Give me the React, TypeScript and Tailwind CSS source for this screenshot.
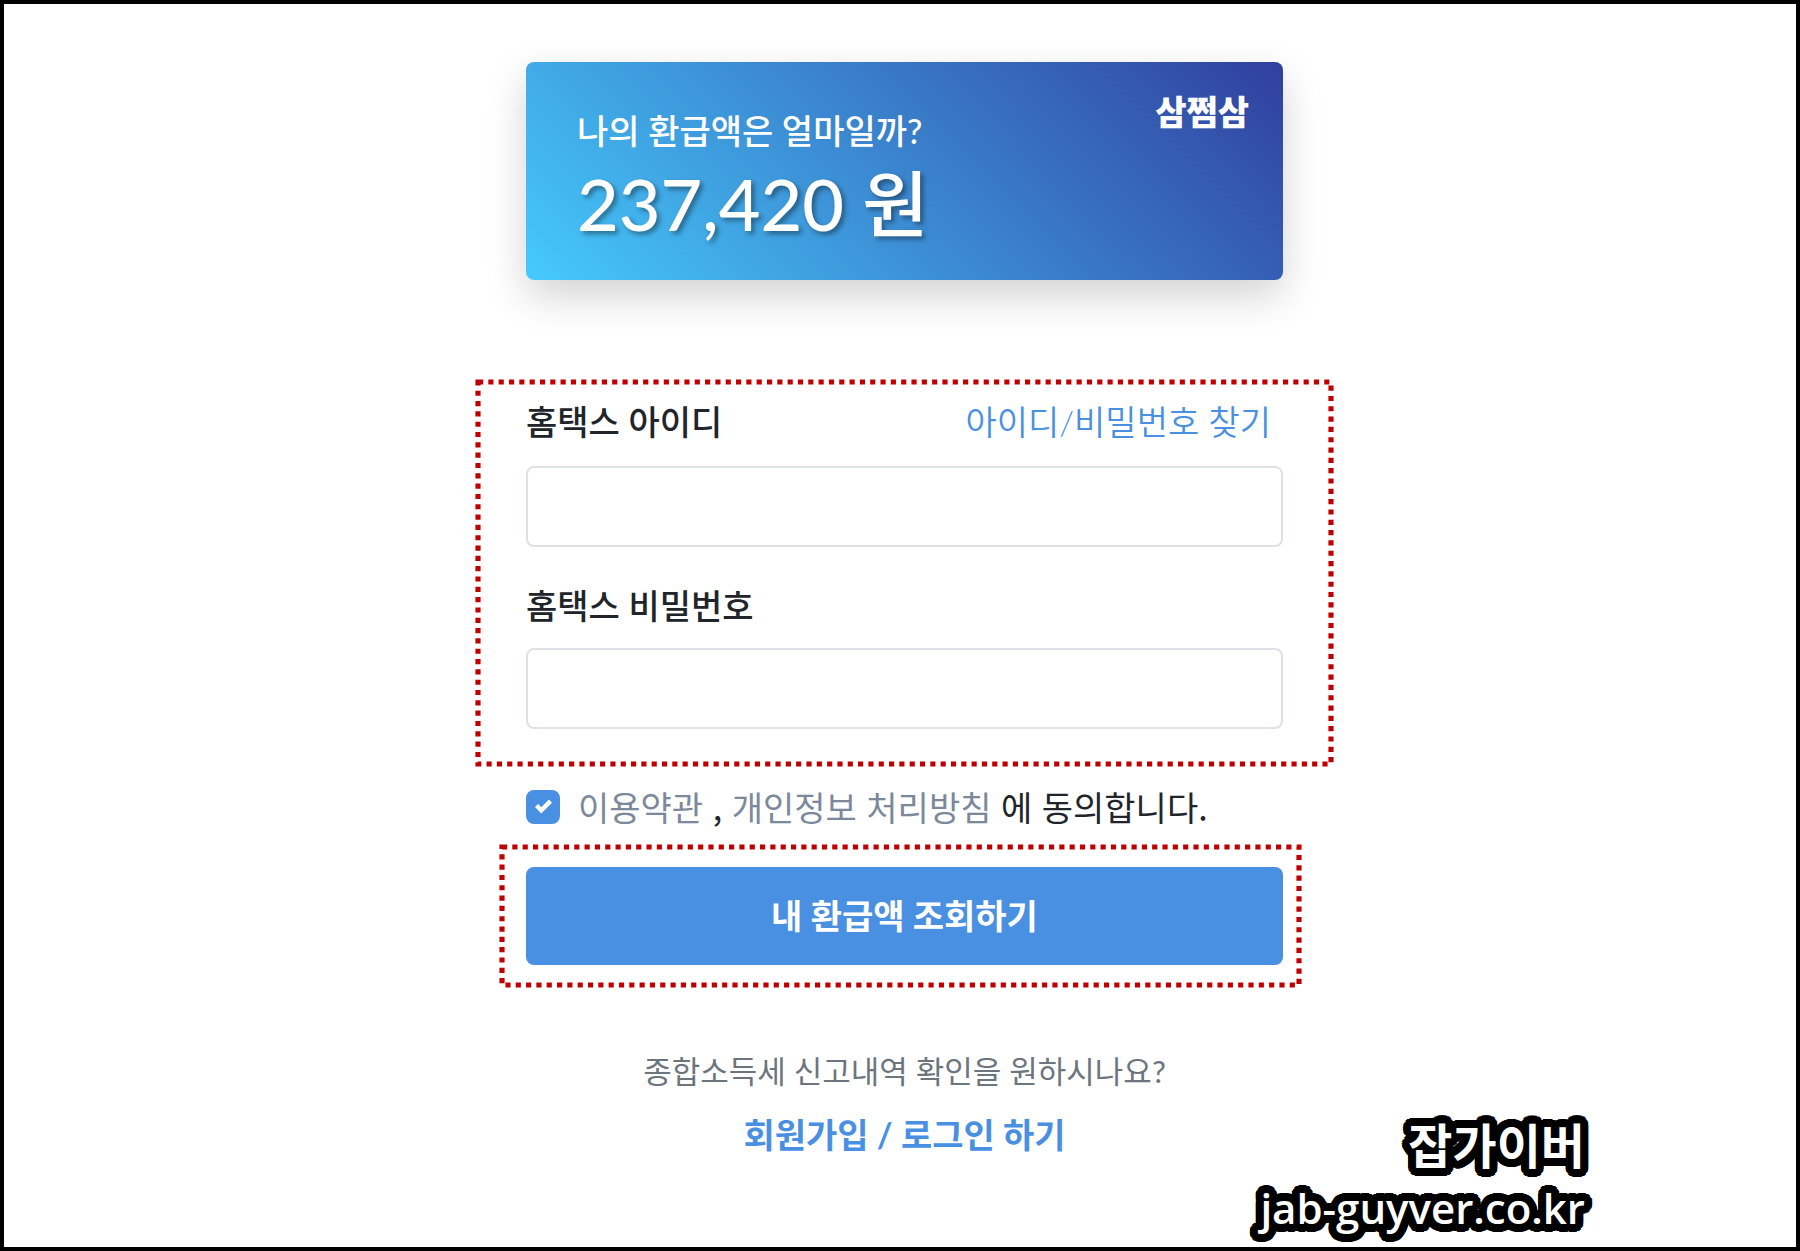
import React, { useState } from 'react'

function DottedFrame() {
  return (
    <svg
      aria-hidden="true"
      className="absolute inset-0 w-full h-full overflow-visible pointer-events-none"
    >
      <rect
        width="100%"
        height="100%"
        fill="none"
        stroke="#c00000"
        strokeWidth="5.16"
        strokeDasharray="5.16"
      />
    </svg>
  )
}

function RefundCard() {
  return (
    <section className="flex justify-between h-[218px] rounded-lg pl-[51px] pr-[34px] text-white bg-[linear-gradient(45deg,#45cafc,#303f9f)] shadow-[0_16px_40px_rgba(0,0,0,0.175)]">
      <div className="pt-[45px]">
        <h1 className="text-[34px] leading-[48px] font-medium">
          나의 환급액은 얼마일까?
        </h1>
        <p className="text-[72px] leading-[96px] font-medium [text-shadow:3px_3px_5px_rgba(0,0,0,0.4)]">
          237,420 원
        </p>
      </div>
      <div className="pt-[26px] text-[34px] leading-[48px] font-black">
        삼쩜삼
      </div>
    </section>
  )
}

// text-shadow copies on two rings give an even outline with round corners
function ringShadow(radius: number, copies: number) {
  return Array.from({ length: copies }, (_, i) => {
    const angle = (i / copies) * Math.PI * 2
    const x = (Math.cos(angle) * radius).toFixed(2)
    const y = (Math.sin(angle) * radius).toFixed(2)
    return `${x}px ${y}px 0 #000`
  }).join(', ')
}

const outline = `${ringShadow(4, 12)}, ${ringShadow(8, 32)}`

function Watermark() {
  return (
    <div
      className="absolute right-[211px] bottom-2 text-right text-white leading-[62px] font-semibold font-['Open_Sans','Noto_Sans_CJK_KR',sans-serif]"
      style={{ textShadow: outline }}
    >
      <p className="text-[48px]">잡가이버</p>
      <p className="text-[42px]">jab-guyver.co.kr</p>
    </div>
  )
}

const inputClass =
  'block w-full h-[81px] px-5 text-[34px] bg-white border-2 border-[#dee2e6] rounded-lg focus:outline-none focus:border-[#4a90e2]'

export default function App() {
  const [userId, setUserId] = useState('')
  const [password, setPassword] = useState('')
  const [agreed, setAgreed] = useState(true)

  return (
    <div
      lang="ko"
      className="relative min-h-screen bg-white border-4 border-black pl-[9px] pt-[58px] pb-16 text-[#212529] font-[Lato,'Noto_Sans_CJK_KR',sans-serif]"
    >
      <main className="w-full max-w-[757px] mx-auto">
        <RefundCard />

        <form onSubmit={(e) => e.preventDefault()}>
          <div className="relative mt-[102px] -mx-12 px-12 pt-4 pb-[35px]">
            <DottedFrame />
            <div className="flex justify-between mb-5 text-[34px] leading-[48px]">
              <label htmlFor="hometax-id" className="font-medium">
                홈택스 아이디
              </label>
              <a
                href="#find"
                className="relative pr-3 font-[350] text-[#4a90e2]"
              >
                아이디/비밀번호 찾기
              </a>
            </div>
            <input
              id="hometax-id"
              type="text"
              value={userId}
              onChange={(e) => setUserId(e.target.value)}
              className={inputClass}
            />
            <label
              htmlFor="hometax-password"
              className="block mt-[35px] mb-[18px] text-[34px] leading-[48px] font-medium"
            >
              홈택스 비밀번호
            </label>
            <input
              id="hometax-password"
              type="password"
              value={password}
              onChange={(e) => setPassword(e.target.value)}
              className={inputClass}
            />
          </div>

          <div className="flex items-center gap-[18px] h-[83px] pt-0.5 text-[34px] leading-[48px]">
            <span className="relative shrink-0 w-[34px] h-[34px]">
              <input
                id="agree"
                type="checkbox"
                checked={agreed}
                onChange={(e) => setAgreed(e.target.checked)}
                className="block appearance-none w-full h-full rounded-lg border-2 border-[#adb5bd] checked:border-[#4a90e2] checked:bg-[#4a90e2]"
              />
              {agreed && (
                <svg
                  viewBox="0 0 8 8"
                  className="absolute inset-0 m-auto w-[17px] h-[17px] pointer-events-none"
                >
                  <path
                    fill="#fff"
                    d="M6.564.75l-3.59 3.612-1.538-1.55L0 4.26 2.974 7.25 8 2.193z"
                  />
                </svg>
              )}
            </span>
            <label
              htmlFor="agree"
              className="font-['Noto_Sans_CJK_KR',sans-serif]"
            >
              <a href="#terms" className="text-[#7b899b]">
                이용약관
              </a>{' '}
              ,{' '}
              <a href="#privacy" className="text-[#7b899b]">
                개인정보 처리방침
              </a>{' '}
              에 동의합니다.
            </label>
          </div>

          <div className="relative -ml-6 -mr-4 pl-6 pr-4 py-5">
            <DottedFrame />
            <button
              type="submit"
              className="block w-full h-[98px] rounded-lg bg-[#4a90e2] text-white text-[34px] leading-[48px] font-bold"
            >
              내 환급액 조회하기
            </button>
          </div>
        </form>

        <div className="mt-[62px] text-center leading-[48px]">
          <p className="text-[31px] text-[#6c757d]">
            종합소득세 신고내역 확인을 원하시나요?
          </p>
          <a
            href="#login"
            className="inline-block mt-4 text-[34px] font-bold text-[#4a90e2]"
          >
            회원가입 / 로그인 하기
          </a>
        </div>
      </main>

      <Watermark />
    </div>
  )
}
